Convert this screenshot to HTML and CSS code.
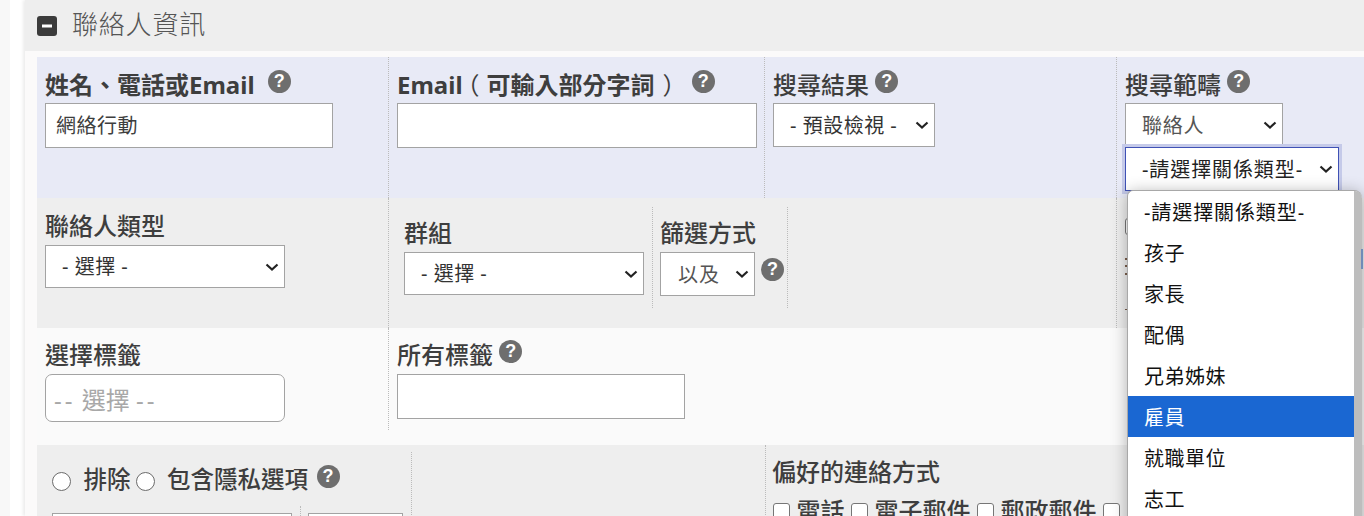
FILE: index.html
```html
<!DOCTYPE html>
<html lang="zh-Hant">
<head>
<meta charset="utf-8">
<title>聯絡人資訊</title>
<link rel="stylesheet" href="styles.css">
</head>
<body>
<div class="page">
  <div class="rail"></div>
  <main class="panel">
    <header class="head">
      <svg class="toggle" viewBox="0 0 20 20" aria-hidden="true"><rect width="20" height="20" rx="3" fill="#3b3b3b"/><rect x="5" y="8.5" width="10" height="3" fill="#fff"/></svg>
      <h1 class="head-title">聯絡人資訊</h1>
    </header>
    <div class="body">
      <section class="row row-a">
        <div class="cell c1">
          <div class="label strong">姓名、電話或Email <span class="help help-gap">?</span></div>
          <input class="field w288" value="網絡行動">
        </div>
        <div class="cell c2">
          <div class="label strong">Email<span class="paren-l">（</span>可輸入部分字詞<span class="paren-r">）</span> <span class="help help-gap">?</span></div>
          <input class="field w360">
        </div>
        <div class="cell c3">
          <div class="label">搜尋結果 <span class="help">?</span></div>
          <div class="sel w162 short"><span>- 預設檢視 -</span><svg class="chev" viewBox="0 0 14 8"><path d="M1.5 1.5 7 6.5l5.5-5" /></svg></div>
        </div>
        <div class="cell c4">
          <div class="label">搜尋範疇 <span class="help">?</span></div>
          <div class="sel w158 short"><span class="soft">聯絡人</span><svg class="chev" viewBox="0 0 14 8"><path d="M1.5 1.5 7 6.5l5.5-5" /></svg></div>
          <div class="sel w214 focus"><span>-請選擇關係類型-</span><svg class="chev" viewBox="0 0 14 8"><path d="M1.5 1.5 7 6.5l5.5-5" /></svg></div>
        </div>
      </section>
      <section class="row row-b">
        <div class="cell c1">
          <div class="label lh-b">聯絡人類型</div>
          <div class="sel w240 mid"><span>- 選擇 -</span><svg class="chev" viewBox="0 0 14 8"><path d="M1.5 1.5 7 6.5l5.5-5" /></svg></div>
        </div>
        <div class="cell c-nest">
          <div class="nest">
            <div class="ncell n1">
              <div class="label">群組</div>
              <div class="sel w240 mid"><span>- 選擇 -</span><svg class="chev" viewBox="0 0 14 8"><path d="M1.5 1.5 7 6.5l5.5-5" /></svg></div>
            </div>
            <div class="ncell n2">
              <div class="label">篩選方式</div>
              <div class="inline">
                <div class="sel w95 tall"><span class="light">以及</span><svg class="chev" viewBox="0 0 14 8"><path d="M1.5 1.5 7 6.5l5.5-5" /></svg></div>
                <span class="help">?</span>
              </div>
            </div>
          </div>
        </div>
        <div class="cell c-rest">
          <span class="box behind-box"></span>
          <div class="specks"></div>
        </div>
      </section>
      <section class="row row-c">
        <div class="cell c1 short-line">
          <div class="label">選擇標籤</div>
          <div class="tagsel"><span class="dash">--</span> 選擇 <span class="dash">--</span></div>
        </div>
        <div class="cell c2 short-line plain">
          <div class="label">所有標籤 <span class="help">?</span></div>
          <input class="field w288">
        </div>
      </section>
      <section class="row row-d">
        <div class="privacy">
          <div class="radios">
            <span class="radio"></span><span class="label rlabel">排除</span>
            <span class="radio"></span><span class="label rlabel">包含隱私選項</span>
            <span class="help up">?</span>
          </div>
          <div class="boxes">
            <div class="stub w240"></div>
            <div class="sep"></div>
            <div class="stub w95"></div>
          </div>
        </div>
        <div class="blank"></div>
        <div class="pref">
          <div class="label">偏好的連絡方式</div>
          <div class="checks">
            <span class="box"></span><span class="label clabel">電話</span>
            <span class="box"></span><span class="label clabel">電子郵件</span>
            <span class="box"></span><span class="label clabel">郵政郵件</span>
            <span class="box"></span>
          </div>
        </div>
      </section>
    </div>
  </main>
</div>
<ul class="menu">
  <li class="first">-請選擇關係類型-</li>
  <li>孩子</li>
  <li>家長</li>
  <li>配偶</li>
  <li>兄弟姊妹</li>
  <li class="on">雇員</li>
  <li>就職單位</li>
  <li>志工</li>
</ul>
<div class="menu-track"></div>
<div class="sliver"></div>
</body>
</html>
```
FILE: styles.css
```css
* { box-sizing: border-box; }
html, body { margin: 0; height: 516px; overflow: hidden; background: #fff; }
body { position: relative; font-family: "Noto Sans", "Noto Sans CJK TC", sans-serif; color: #3e3e3e; }
.page { display: flex; height: 516px; overflow: hidden; padding-left: 10px; background: #f8f8f8; }
.rail { width: 15px; background: #fff; flex: none; }
.panel { flex: 1; background: #fbfafa; box-shadow: -2px 0 3px rgba(0,0,0,.08); min-width: 0; }
.head { height: 51px; background: #eee; display: flex; align-items: center; padding-left: 12px; gap: 15px; }
.toggle { width: 20px; height: 20px; flex: none; }
.head-title { margin: 0; padding-bottom: 3px; font-size: 26px; font-weight: 300; letter-spacing: .8px; color: #555; line-height: 1; }
.body { padding: 6px 0 0 12px; }
.row { display: flex; }
.row-a { height: 141px; background: #e8eaf6; }
.row-b { height: 130px; background: #eee; }
.row-c { height: 117px; background: #fafafa; }
.row-d { height: 80px; background: #eee; }
.cell { padding: 12px 8px 0; border-right: 1px dotted #bbb; flex: none; }
.c1 { width: 352px; }
.c2 { width: 376px; }
.c3 { width: 352px; }
.c4 { flex: 1; border-right: 0; }
.label { font-size: 24px; font-weight: 500; line-height: 32px; color: #3e3e3e; white-space: nowrap; height: 32px; margin-bottom: 2px; }
.strong { font-weight: 700; }
.paren-l { font-feature-settings: "halt"; padding: 0 7px 0 5px; font-weight: 400; }
.paren-r { font-feature-settings: "halt"; padding: 0 4px 0 8px; font-weight: 400; }
.help { display: inline-block; width: 23px; height: 23px; border-radius: 50%; background: #6e6e6e; color: #fff; font-size: 18px; font-weight: 700; line-height: 23px; text-align: center; vertical-align: 7px; font-family: "Liberation Sans", sans-serif; }
.help-gap { margin-left: 7px; }
.field { display: block; height: 45px; border: 1px solid #a3a3a3; background: #fff; padding: 0 10px 2px; font: 400 20px "Noto Sans", "Noto Sans CJK TC", sans-serif; letter-spacing: .5px; color: #3e3e3e; border-radius: 0; outline: 0; }
.w288 { width: 288px; }
.w360 { width: 360px; }
.sel { display: flex; align-items: center; justify-content: space-between; background: #fff; border: 1px solid #a3a3a3; font-size: 20px; letter-spacing: .5px; color: #333; padding: 0 5px 2px 16px; white-space: nowrap; }
.sel .chev { margin-top: 2px; }
.short { height: 44px; }
.mid { height: 43px; }
.tall { height: 44px; }
.w162 { width: 162px; }
.w158 { width: 158px; }
.w214 { width: 214px; height: 44px; }
.w240 { width: 240px; }
.w95 { width: 95px; }
.chev { width: 14px; height: 8px; flex: none; fill: none; stroke: #222; stroke-width: 2.2; }
.soft { color: #555; letter-spacing: .7px; }
.focus { border-color: #3f51b5; box-shadow: 0 0 0 3px #c5cae9; position: relative; color: #222; letter-spacing: .9px; }
.row-b .cell { height: 130px; }
.row-b .c1 { padding-top: 13px; }
.lh-b { margin-top: -1px; margin-bottom: 3px; }
.row-b .c-nest { width: 728px; padding: 9px 0 0 0; border-right: 1px dotted #bbb; }
.nest { display: flex; height: 101px; }
.ncell { padding: 10px 0 0 15px; border-right: 1px dotted #bbb; }
.ncell .label { margin-bottom: 3px; }
.n1 { width: 264px; }
.n2 { width: 135px; padding-left: 7px; }
.inline { display: flex; align-items: flex-start; gap: 6px; }
.inline .help { margin-top: 6px; flex: none; }
.light { color: #555; letter-spacing: 1px; padding-left: 1px; }
.row-b .c-rest { flex: 1; border-right: 0; padding-top: 20px; }
.behind-box { display: block; }
.specks { width: 2px; height: 52px; margin-top: 18px; background: linear-gradient(#7b5f4d 0 2px, transparent 2px 7px, #7b5f4d 7px 9px, transparent 9px 15px, #7b5f4d 15px 17px, transparent 17px 51px, #7b5f4d 51px); }
.row-c .cell { padding-top: 11px; }
.row-c .label { margin-bottom: 3px; }
.short-line { height: 102px; }
.plain { border-right: 0; }
.tagsel { width: 240px; height: 48px; border: 1px solid #a3a3a3; border-radius: 7px; background: #fff; color: #a8a8a8; font-size: 24px; line-height: 49px; padding-left: 8px; white-space: nowrap; }
.dash { letter-spacing: 3px; }
.privacy { width: 374px; flex: none; padding: 18px 0 0 15px; }
.radios { display: flex; align-items: center; height: 32px; }
.radio { width: 19px; height: 19px; border: 1px solid #6b6b6b; border-radius: 50%; background: #fff; flex: none; margin-top: 5px; }
.rlabel { margin: 0 5px 0 12.5px; height: 32px; font-size: 23.5px; }
.up { transform: translateY(-3px); margin-left: 3.5px; flex: none; }
.boxes { display: flex; margin-top: 18px; }
.stub { height: 40px; border: 1px solid #a3a3a3; background: #fff; flex: none; }
.sep { width: 1px; height: 40px; margin: -7px 7px 0 8px; border-left: 1px dotted #bbb; flex: none; }
.blank { width: 354px; flex: none; margin-top: 7px; border-left: 1px dotted #bbb; height: 73px; }
.pref { flex: 1; padding: 11px 0 0 6px; border-left: 1px dotted #bbb; min-width: 0; }
.checks { display: flex; align-items: center; white-space: nowrap; height: 32px; margin: 7px 0 0 1px; }
.box { display: inline-block; width: 17px; height: 17px; border: 1px solid #767676; border-radius: 3px; background: #fff; flex: none; }
.clabel { margin: 0 6.5px; height: 32px; }
.menu { position: absolute; left: 1127px; top: 190px; width: 235px; height: 340px; margin: 0; padding: 0; list-style: none; background: #fff; border: 1px solid #a8a8a8; border-right: 0; border-radius: 6px 8px 0 0; box-shadow: 0 2px 16px rgba(0,0,0,.3); font-size: 20px; color: #111; overflow: hidden; }
.menu li { height: 41px; line-height: 43px; padding-left: 16px; letter-spacing: .5px; white-space: nowrap; width: 226px; }
.menu .first { letter-spacing: .9px; }
.menu .on { background: #1a67d2; color: #fff; }
.menu-track { position: absolute; left: 1354px; top: 191px; width: 8px; height: 325px; background: #bdbdbd; border-radius: 0 7px 0 0; }
.sliver { position: absolute; left: 1361px; top: 249px; width: 2px; height: 20px; background: #6f8bb8; }
```
